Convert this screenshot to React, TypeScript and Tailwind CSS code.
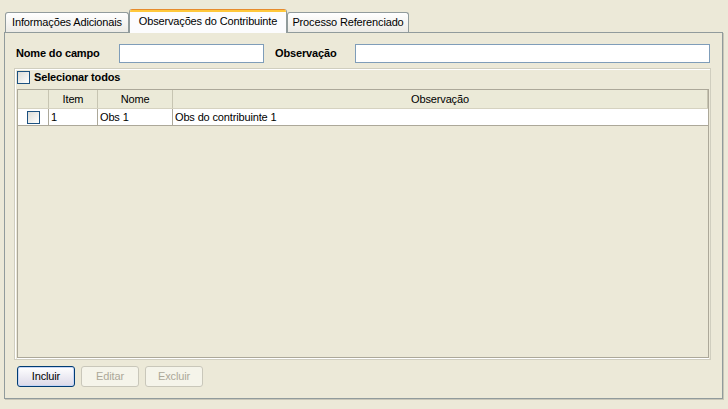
import type { ReactNode } from 'react';

const FONT = "font-['Liberation_Sans','Arial',sans-serif]";

function XpCheck() {
    return (
        <span className="inline-block w-[13px] h-[13px] border border-[#1C5180] bg-linear-to-br from-[#DCDCD7] to-[#FFFFFF] shrink-0" />
    );
}

function Tab({ active, width, children }: { active?: boolean; width: string; children: ReactNode }) {
    if (active) {
        return (
            <div
                className={`relative z-10 -mb-px h-[24px] ${width} shrink-0 flex flex-col rounded-t-[3px] border-x border-[#919B9C] bg-[#FCFCFE] overflow-hidden`}
            >
                <div className="h-[1px] bg-[#E68B2C]" />
                <div className="h-[2px] bg-[#FFC83C]" />
                <div className="flex-1 flex items-center justify-center pb-[3px] whitespace-nowrap">{children}</div>
            </div>
        );
    }
    return (
        <div
            className={`h-[20px] ${width} shrink-0 whitespace-nowrap flex items-center justify-center rounded-t-[3px] border border-b-0 border-[#919B9C] bg-linear-to-b from-[#FFFFFF] to-[#ECEBE6]`}
        >
            {children}
        </div>
    );
}

function Btn({ disabled, children }: { disabled?: boolean; children: ReactNode }) {
    if (disabled) {
        return (
            <button
                type="button"
                disabled
                className="w-[58px] h-[21px] rounded-[3px] border border-[#C9C7BA] bg-[#F5F4EA] text-[#ACA899] text-[11px]"
            >
                {children}
            </button>
        );
    }
    return (
        <button
            type="button"
            className="w-[58px] h-[21px] rounded-[3px] border border-[#003C74] bg-linear-to-b from-[#FFFFFF] to-[#DCD9E8] shadow-[inset_0_0_0_1px_#C6D5F5] text-black text-[11px]"
        >
            {children}
        </button>
    );
}

export default function App() {
    return (
        <div className={`w-[728px] h-[409px] bg-[#ECE9D8] text-[11px] tracking-[-0.15px] text-black ${FONT} flex flex-col`}>
            {/* Tabs */}
            <div className="flex items-end h-[32px] pl-[5px]">
                <Tab width="w-[124px]">Informações Adicionais</Tab>
                <Tab active width="w-[158px]">Observações do Contribuinte</Tab>
                <Tab width="w-[122px]">Processo Referenciado</Tab>
            </div>

            {/* Panel */}
            <div className="ml-[4px] w-[719px] h-[367px] border border-[#919B9C] shadow-[1px_1px_0_#C8C6B8] flex flex-col px-[9px]">
                <div className="mt-[11px] h-[19px] flex items-center whitespace-nowrap">
                    <span className="ml-[2px] w-[103px] font-bold">Nome do campo</span>
                    <div className="w-[145px] h-[19px] border border-[#7F9DB9] bg-white" />
                    <span className="ml-[11px] w-[80px] font-bold">Observação</span>
                    <div className="w-[355px] h-[19px] border border-[#7F9DB9] bg-white" />
                </div>

                {/* Group */}
                <div className="mt-[5px] w-[697px] h-[292px] border border-[#D0CEBF] shadow-[inset_1px_1px_0_#FFFFFF] flex flex-col pl-[2px] pt-[2px]">
                    <label className="flex items-center gap-[4px] h-[13px] font-bold">
                        <XpCheck />
                        Selecionar todos
                    </label>

                    <div className="mt-[5px] w-[692px] h-[269px] border border-[#ACA899] shadow-[0_1px_0_#FFFFFF] flex flex-col">
                        {/* Header */}
                        <div className="flex h-[19px] bg-[#EBEAD8] border-b border-[#D5D2C0]">
                            <div className="w-[31px] border-r border-[#C7C5B2]" />
                            <div className="w-[49px] border-r border-[#C7C5B2] flex items-center justify-center">Item</div>
                            <div className="w-[75px] border-r border-[#C7C5B2] flex items-center justify-center">Nome</div>
                            <div className="flex-1 border-r border-[#C7C5B2] flex items-center justify-center">Observação</div>
                        </div>
                        {/* Row */}
                        <div className="flex h-[17px] bg-white border-b border-[#ACA899]">
                            <div className="w-[31px] border-r border-[#ACA899] flex items-center justify-center">
                                <XpCheck />
                            </div>
                            <div className="w-[49px] border-r border-[#ACA899] pl-[2px] flex items-center">1</div>
                            <div className="w-[75px] border-r border-[#ACA899] pl-[2px] flex items-center">Obs 1</div>
                            <div className="flex-1 pl-[2px] flex items-center">Obs do contribuinte 1</div>
                        </div>
                    </div>
                </div>

                {/* Buttons */}
                <div className="mt-[6px] ml-[3px] flex gap-[6px]">
                    <Btn>Incluir</Btn>
                    <Btn disabled>Editar</Btn>
                    <Btn disabled>Excluir</Btn>
                </div>
            </div>
        </div>
    );
}
